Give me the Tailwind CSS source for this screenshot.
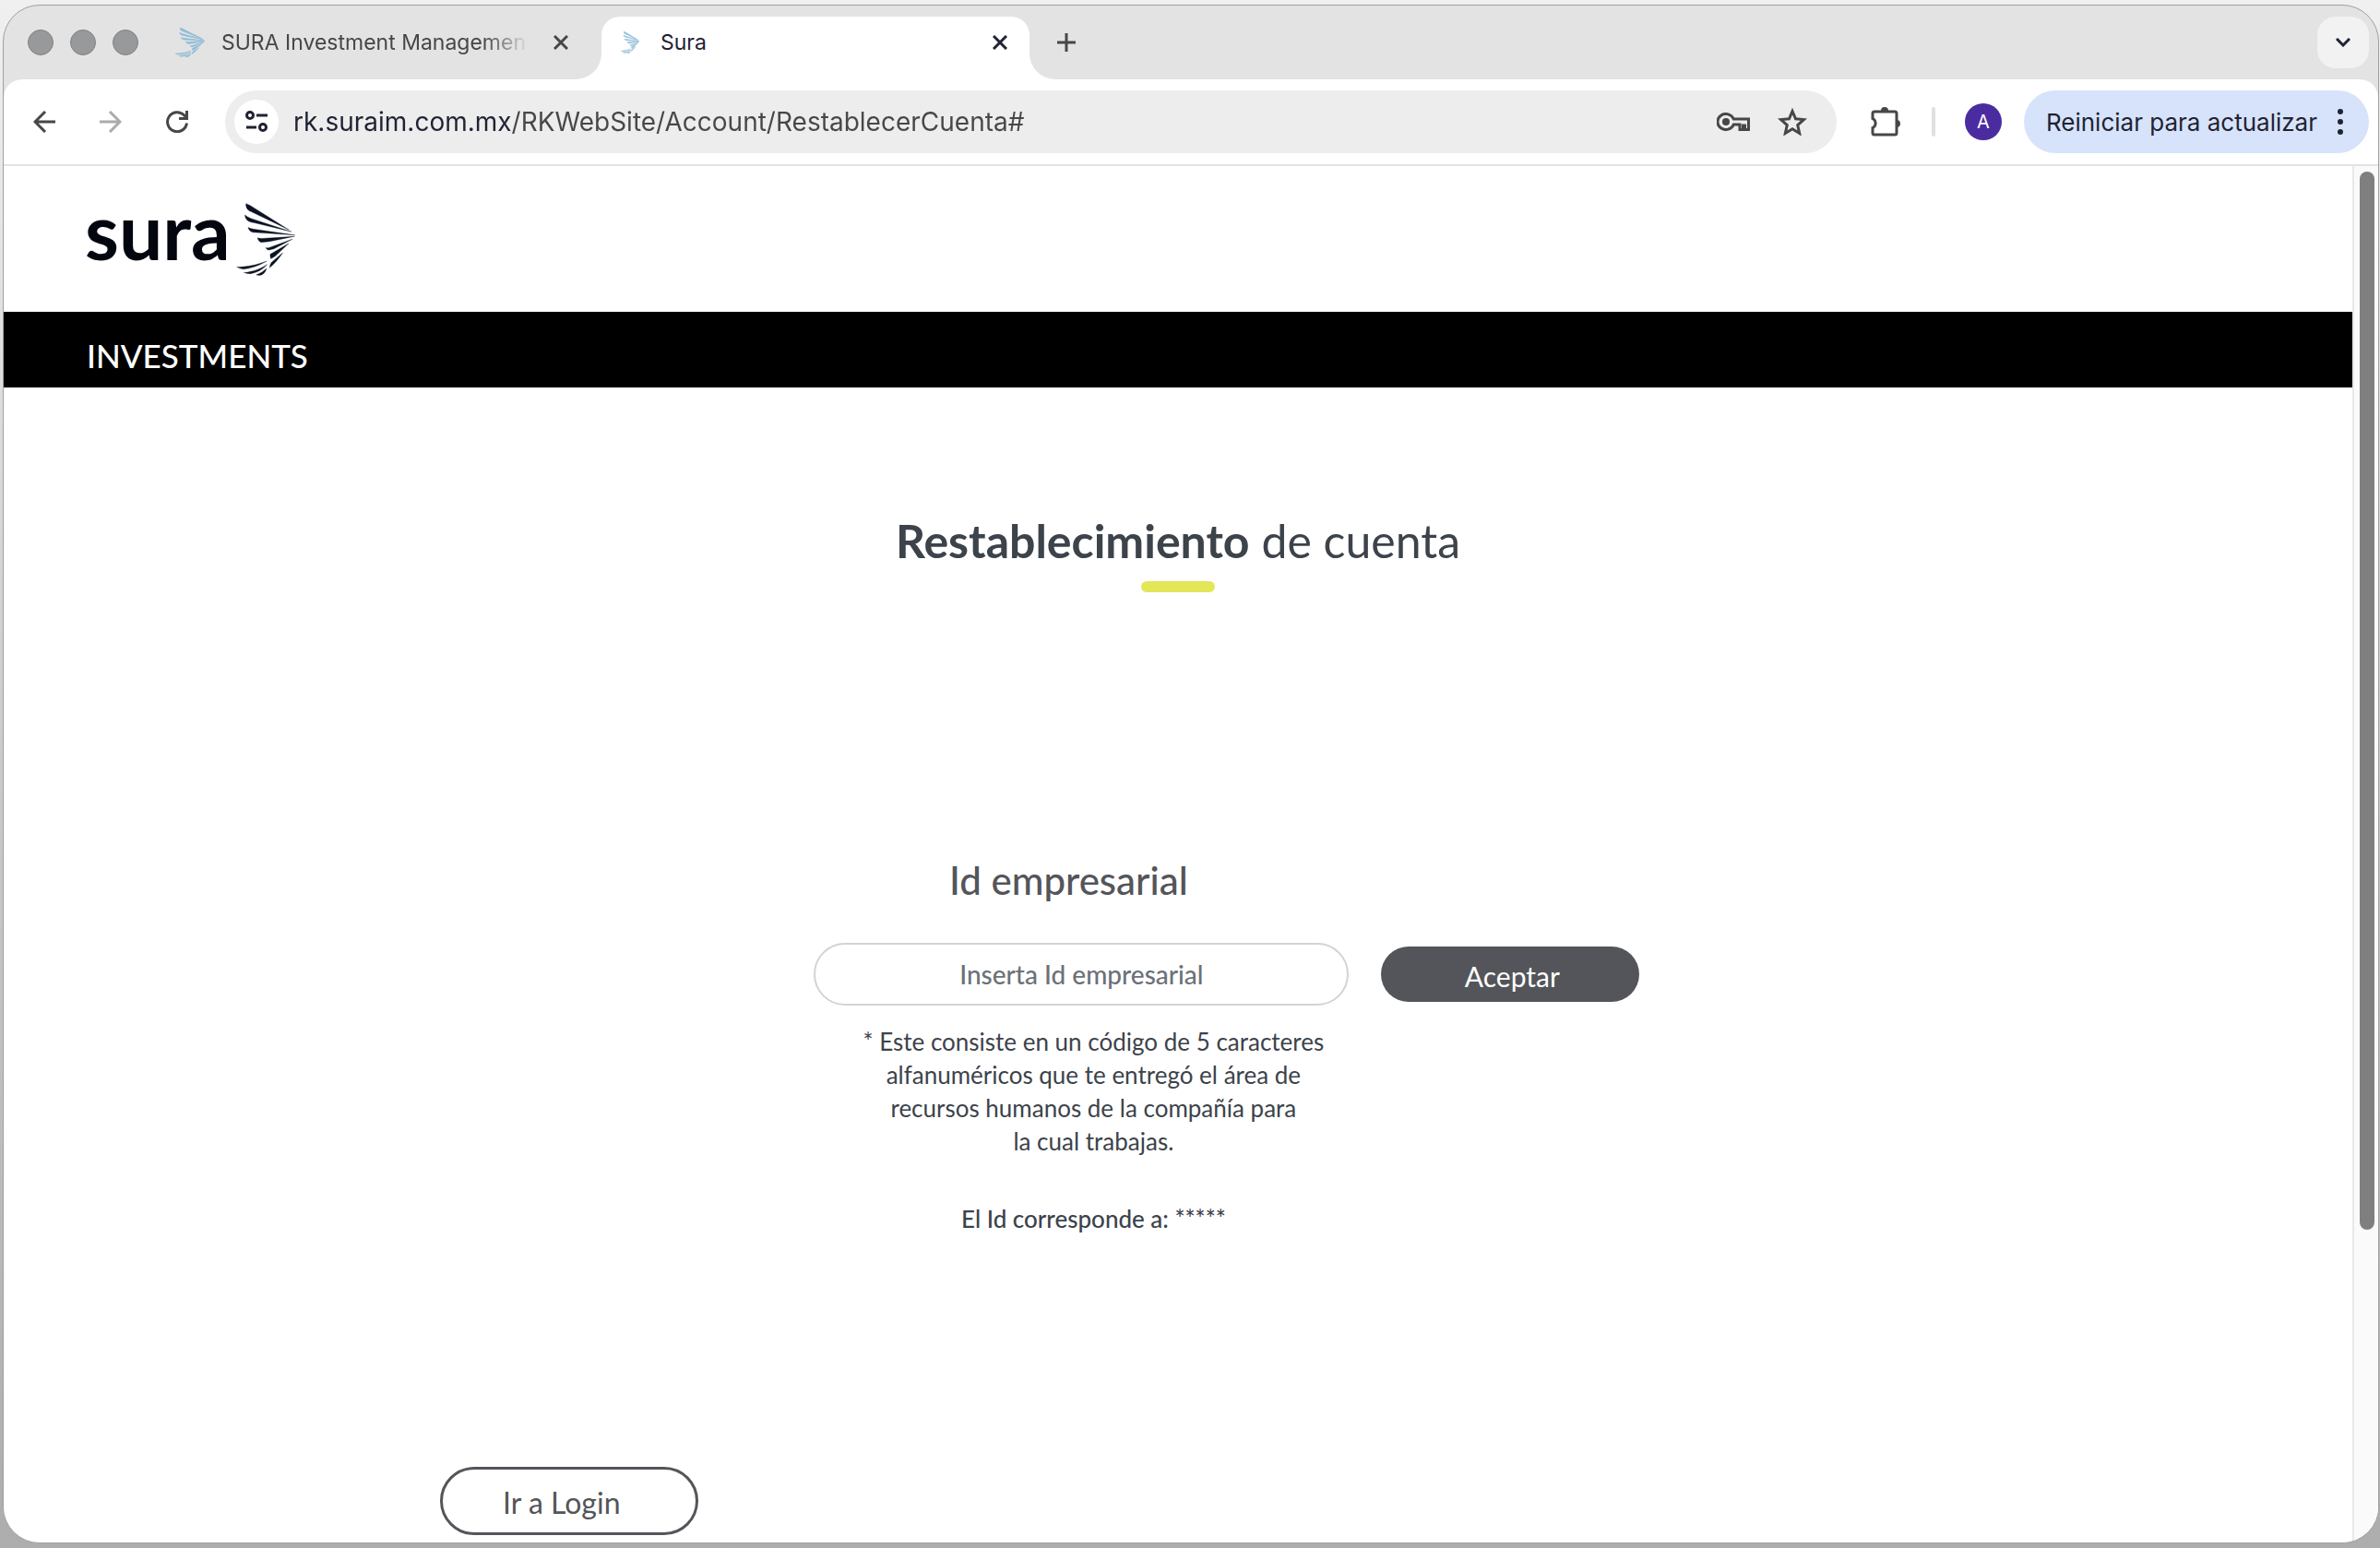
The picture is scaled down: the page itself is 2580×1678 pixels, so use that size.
<!DOCTYPE html>
<html lang="es-MX">
<head>
    <meta charset="UTF-8">
    <meta name="viewport" content="width=device-width, initial-scale=1.0">
    <title>Sura</title>
    <script src="https://cdn.jsdelivr.net/npm/@tailwindcss/browser@4"></script>
</head>
<body class="min-h-screen flex flex-col bg-linear-to-b from-[#f0f0f0] via-[#c9cbca] to-[#adadad] pt-[5px] pl-[3px] pr-px pb-[5px] font-['Inter',sans-serif]">
    <!-- Símbolo de las alas -->
    <svg class="hidden" aria-hidden="true">
        <symbol id="alas" viewBox="48 28 194 238" preserveAspectRatio="none">
            <path d="M80 30Q79 46 90 53L222 116L94 36Q84 31 80 30Z"/>
            <path d="M77 67Q77 81 90 88Q98 91 108 93L230 122L98 79Q84 74 77 67Z"/>
            <path d="M87 108Q91 121 102 124L241 133L104 113Q94 112 87 108Z"/>
            <path d="M118 142Q121 154 130 157L158 154L240 137L132 144Q124 144 118 142Z"/>
            <path d="M145 174Q149 182 156 182L172 178L233 146L156 174Q149 176 145 174Z"/>
            <path d="M160 195Q159 204 162 210L176 202L221 160L168 191Z"/>
            <path d="M158 240Q158 230 164 222L201 191Q184 218 158 240Z"/>
            <path d="M50 237Q58 243 72 244Q106 242 149 218Q110 233 74 236Q60 238 50 237Z"/>
            <path d="M73 255Q82 260 96 259Q128 254 150 229Q125 246 96 252Q82 256 73 255Z"/>
            <path d="M114 263Q124 266 132 263Q144 257 148 242Q134 256 114 263Z"/>
        </symbol>
    </svg>

    <div class="flex-1 flex flex-col rounded-[40px] border border-[#a0a0a0] bg-[#e3e3e3] overflow-hidden">
        <!-- Pestañas -->
        <header class="flex items-stretch h-20 text-[23px] text-[#474747]">
            <div class="flex items-center gap-[18px] pl-[26px]">
                <span class="size-7 rounded-full bg-[#98999b] border border-[#808183]"></span>
                <span class="size-7 rounded-full bg-[#98999b] border border-[#808183]"></span>
                <span class="size-7 rounded-full bg-[#98999b] border border-[#808183]"></span>
            </div>
            <div class="flex items-center w-[474px] pl-10">
                <svg class="size-8 shrink-0 text-[#8fbdd6] fill-current stroke-current stroke-[5px]"><use href="#alas"/></svg>
                <span class="ml-[18px] w-[334px] overflow-hidden whitespace-nowrap mask-r-from-85% mask-r-to-100%">SURA Investment Managemen</span>
                <button class="ml-[26px]" aria-label="Cerrar pestaña">
                    <svg class="size-4" viewBox="0 0 16 16" fill="none" stroke="currentColor" stroke-width="3"><path d="M1 1l14 14M15 1L1 15"/></svg>
                </button>
            </div>
            <div class="self-end size-7 bg-white"><div class="size-full bg-[#e3e3e3] rounded-br-[28px]"></div></div>
            <div class="self-end flex items-center w-[464px] h-[68px] pl-[21px] pr-6 pb-3 rounded-t-[20px] bg-white text-[#1f2333]">
                <svg class="w-5 h-6 shrink-0 text-[#8fbdd6] fill-current stroke-current stroke-[5px]"><use href="#alas"/></svg>
                <span class="ml-[23px] flex-1">Sura</span>
                <button aria-label="Cerrar pestaña">
                    <svg class="size-4" viewBox="0 0 16 16" fill="none" stroke="currentColor" stroke-width="3"><path d="M1 1l14 14M15 1L1 15"/></svg>
                </button>
            </div>
            <div class="self-end size-7 bg-white"><div class="size-full bg-[#e3e3e3] rounded-bl-[28px]"></div></div>
            <button class="ml-[2px]" aria-label="Nueva pestaña">
                <svg class="size-5" viewBox="0 0 20 20" fill="none" stroke="currentColor" stroke-width="3"><path d="M10 0v20M0 10h20"/></svg>
            </button>
            <button class="ml-auto mr-[10px] mt-3 flex items-center justify-center size-14 rounded-[20px] bg-[#f2f2f2] text-[#1f2333]" aria-label="Buscar pestañas">
                <svg class="w-4 h-[10px]" viewBox="0 0 16 10" fill="none" stroke="currentColor" stroke-width="3"><path d="M1 1l7 7 7-7"/></svg>
            </button>
        </header>

        <!-- Barra de direcciones -->
        <nav class="flex items-center h-[94px] pr-[10px] rounded-t-[20px] bg-white border-b-2 border-[#e3e3e3] text-[#474747]">
            <button class="ml-8" aria-label="Atrás">
                <svg class="size-6" viewBox="0 0 24 24" fill="none" stroke="currentColor" stroke-width="3"><path d="M24 12H2M13 1L2 12l11 11"/></svg>
            </button>
            <button class="ml-12 text-[#ababab]" aria-label="Adelante" disabled>
                <svg class="size-6" viewBox="0 0 24 24" fill="none" stroke="currentColor" stroke-width="3"><path d="M0 12h22M11 1l11 11-11 11"/></svg>
            </button>
            <button class="ml-12" aria-label="Recargar">
                <svg class="size-6" viewBox="0 0 24 24" fill="none" stroke="currentColor" stroke-width="3"><path d="M22.500 13.500A10.500 10.500 0 1 1 19.500 4.700L21 6.500"/><path d="M22.500 0v8.500H14"/></svg>
            </button>
            <div class="ml-10 flex-1 flex items-center h-[68px] pl-[10px] pr-8 rounded-full bg-[#ededed]">
                <button class="flex items-center justify-center size-12 rounded-full bg-white text-[#1f2333]" aria-label="Información del sitio">
                    <svg class="size-6" viewBox="0 0 24 24" fill="none" stroke="currentColor" stroke-width="3"><circle cx="5" cy="5" r="3.500"/><path d="M12 5h12M1 18h11"/><circle cx="19" cy="18" r="3.500"/></svg>
                </button>
                <!-- El dominio va más oscuro que la ruta -->
                <input type="text" aria-label="Dirección" value="rk.suraim.com.mx/RKWebSite/Account/RestablecerCuenta#"
                    class="ml-4 flex-1 text-[28px] text-transparent bg-clip-text bg-[linear-gradient(90deg,#1f2333_236px,#474747_236px)]">
                <button aria-label="Contraseñas">
                    <svg class="w-9 h-5" viewBox="0 0 36 20" fill="none" stroke="currentColor" stroke-width="3"><path d="M18.300 7A9 8.500 0 1 0 18.300 13H25v5.500h3.500V14h2v4.500h4V7Z"/><circle cx="10" cy="10" r="4" fill="currentColor" stroke="none"/></svg>
                </button>
                <button class="ml-[30px]" aria-label="Favoritos">
                    <svg class="w-8 h-[30px]" viewBox="0 0 32 30" fill="none" stroke="currentColor" stroke-width="3"><path d="M16 3.500l3.500 8.300 9 .8-6.800 6 2 8.900L16 22.800l-7.700 4.700 2-8.900-6.800-6 9-.8Z"/></svg>
                </button>
            </div>
            <button class="ml-[37px]" aria-label="Extensiones">
                <svg class="size-8" viewBox="0 0 32 32" fill="none" stroke="currentColor" stroke-width="3"><path d="M4 5h22a2 2 0 0 1 2 2v21a2 2 0 0 1-2 2H4a2 2 0 0 1-2-2v-5.500a5.500 5.500 0 0 0 0-10V7a2 2 0 0 1 2-2Z"/><path d="M11 4a4 4 0 0 1 8 0ZM28 14a4 4 0 0 1 0 8Z" fill="currentColor" stroke="none"/></svg>
            </button>
            <span class="ml-[34px] w-1 h-8 rounded-full bg-[#e0e0e0]"></span>
            <button class="ml-8 size-10 rounded-full bg-[#4b2ca0] text-white text-[20px]">A</button>
            <button class="ml-6 flex items-center h-[68px] pl-6 pr-7 rounded-full bg-[#d7e3fb] text-[#1f2333] text-[26px]">
                Reiniciar para actualizar
                <svg class="ml-[22px] w-[6px] h-7" viewBox="0 0 6 28" fill="currentColor"><circle cx="3" cy="3" r="3"/><circle cx="3" cy="14" r="3"/><circle cx="3" cy="25" r="3"/></svg>
            </button>
        </nav>

        <!-- Página -->
        <div class="flex-1 flex bg-white font-['Lato',sans-serif] text-[#3c434b]">
            <main class="flex-1 flex flex-col">
                <div class="flex items-start h-[158px] pl-[88px] pt-10">
                    <span class="w-[164px] text-[84px] leading-[60px] font-bold text-[#03060f]">sura</span>
                    <svg class="w-16 h-[79px] fill-[#0b1322] stroke-[#0b1322] stroke-1"><use href="#alas"/></svg>
                </div>
                <div class="flex items-center h-[82px] pl-[90px] pt-3 bg-black text-white text-[35px] font-medium">INVESTMENTS</div>

                <h1 class="mt-[134px] text-center text-[50px] leading-[64px]"><b>Restablecimiento</b> de cuenta</h1>
                <div class="mx-auto mt-3 w-20 h-3 rounded-full bg-[#e3e657]"></div>

                <form class="mt-[288px] pl-[34.5%]">
                    <label for="idEmpresarial" class="block w-[552px] text-center text-[42px] leading-12 font-medium text-[#54555a]">Id empresarial</label>
                    <div class="mt-11 flex items-center gap-[35px]">
                        <input id="idEmpresarial" type="text" placeholder="Inserta Id empresarial"
                            class="w-[580px] h-[68px] rounded-full border-2 border-[#d0d4d7] text-center text-[28px] font-medium placeholder:text-[#6c7178]">
                        <button type="button" class="w-[280px] h-[60px] pt-1 pl-1 rounded-full bg-[#54555a] text-white text-[30px]">Aceptar</button>
                    </div>
                    <div class="mt-[21px] w-[606px] text-center text-[26px] leading-9">
                        <p>* Este consiste en un código de 5 caracteres<br>alfanuméricos que te entregó el área de<br>recursos humanos de la compañía para<br>la cual trabajas.</p>
                        <p class="mt-12 font-medium">El Id corresponde a: *****</p>
                    </div>
                </form>

                <a href="#" class="mt-[251px] ml-[473px] flex items-center w-[280px] h-[74px] pl-[65px] pt-1 rounded-full border-[3px] border-[#54555a] text-[#54555a] text-[32px]">Ir a Login</a>
            </main>
            <div class="w-7 pt-[6px] pl-[6px] border-l-2 border-[#e8e8e8] bg-[#fafafa]">
                <div class="w-4 h-[1147px] rounded-full bg-[#7f7f7f]"></div>
            </div>
        </div>
    </div>
</body>
</html>
